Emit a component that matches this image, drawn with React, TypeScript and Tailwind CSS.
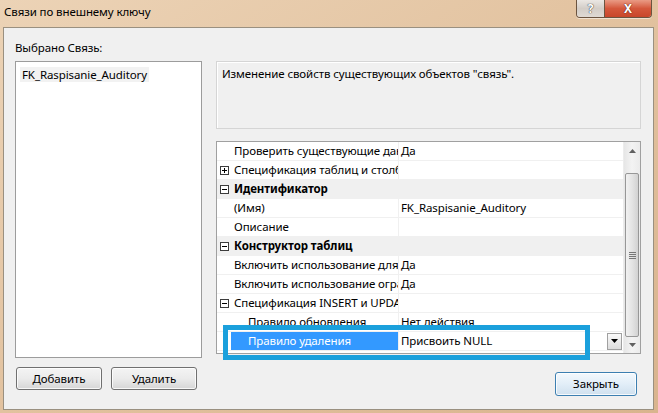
import React from "react"

type Row = {
  name: string
  value?: string
  cat?: boolean
  expander?: "+" | "-"
  indent?: boolean
  selected?: boolean
}

const rows: Row[] = [
  { name: "Проверить существующие данные при создании или повторном включении", value: "Да" },
  { name: "Спецификация таблиц и столбцов", expander: "+" },
  { name: "Идентификатор", cat: true, expander: "-" },
  { name: "(Имя)", value: "FK_Raspisanie_Auditory" },
  { name: "Описание" },
  { name: "Конструктор таблиц", cat: true, expander: "-" },
  { name: "Включить использование для репликации", value: "Да" },
  { name: "Включить использование ограничения внешнего ключа", value: "Да" },
  { name: "Спецификация INSERT и UPDATE", expander: "-" },
  { name: "Правило обновления", value: "Нет действия", indent: true },
  { name: "Правило удаления", value: "Присвоить NULL", indent: true, selected: true },
]

function Expander({ sign }: { sign: "+" | "-" }) {
  return (
    <svg width="9" height="9" viewBox="0 0 9 9" className="block">
      <rect x="0.5" y="0.5" width="8" height="8" fill="#fff" stroke="#3c3c3c" />
      <line x1="2" y1="4.5" x2="7" y2="4.5" stroke="#000" />
      {sign === "+" && <line x1="4.5" y1="2" x2="4.5" y2="7" stroke="#000" />}
    </svg>
  )
}

function WinButton({ label, wide, primary }: { label: string; wide?: boolean; primary?: boolean }) {
  return (
    <div
      className={`${wide ? "w-[82px] h-[24px]" : "w-[86px] h-[23px]"} flex items-center justify-center rounded-[3px] border ${
        primary
          ? "border-[#3c7fb1] bg-gradient-to-b from-[#f4f9fd] via-[#e2eef8] to-[#cfe0ee]"
          : "border-[#707070] bg-gradient-to-b from-[#f4f4f4] via-[#ebebeb] to-[#d6d6d6]"
      } shadow-[inset_0_0_0_1px_rgba(255,255,255,0.8)] text-black`}
    >
      {label}
    </div>
  )
}

function PropRow({ row }: { row: Row }) {
  if (row.cat) {
    return (
      <div className="flex h-[19px] bg-[#f0f0f0] border-b border-[#f0f0f0]">
        <div className="w-[14px] flex items-center justify-center pl-[1px]">
          <Expander sign={row.expander!} />
        </div>
        <div className="pl-[3px] font-bold leading-[18px] whitespace-nowrap">{row.name}</div>
      </div>
    )
  }
  return (
    <div className="flex h-[19px] border-b border-[#f0f0f0] bg-white">
      <div className="w-[14px] flex items-center justify-center pl-[1px]">
        {row.expander && <Expander sign={row.expander} />}
      </div>
      <div
        className={`w-[167px] overflow-hidden whitespace-nowrap leading-[18px] ${row.indent ? "pl-[17px]" : "pl-[3px]"} ${
          row.selected ? "bg-[#3399ff] text-white" : ""
        }`}
      >
        {row.name}
      </div>
      <div className="w-[1px] bg-[#f0f0f0]" />
      <div className="flex-1 flex items-center pl-[2px] pr-[1px] leading-[18px] whitespace-nowrap">
        <span className="flex-1">{row.value}</span>
        {row.selected && (
          <div className="w-[15px] h-[17px] border border-[#a0a0a0] bg-gradient-to-b from-[#fafafa] to-[#dcdcdc] flex items-center justify-center">
            <svg width="7" height="4" viewBox="0 0 7 4">
              <path d="M0 0h7L3.5 4z" fill="#000" />
            </svg>
          </div>
        )}
      </div>
    </div>
  )
}

function Scrollbar() {
  return (
    <div className="w-[17px] flex flex-col bg-gradient-to-r from-[#e6e6e6] via-[#f3f3f3] to-[#ebebeb] border-l border-[#ececec]">
      <div className="h-[17px] flex items-center justify-center">
        <svg width="7" height="4" viewBox="0 0 7 4">
          <path d="M0 4h7L3.5 0z" fill="#606060" />
        </svg>
      </div>
      <div className="h-[14px]" />
      <div className="h-[164px] mx-[1px] rounded-[2px] border border-[#979797] bg-gradient-to-r from-[#f1f1f1] via-[#e4e4e4] to-[#d2d2d2] flex flex-col items-center justify-center gap-[1px]">
        <div className="w-[7px] h-[1px] bg-[#777]" />
        <div className="w-[7px] h-[1px] bg-[#777]" />
        <div className="w-[7px] h-[1px] bg-[#777]" />
        <div className="w-[7px] h-[1px] bg-[#777]" />
      </div>
      <div className="flex-1 flex items-center justify-center">
        <svg width="7" height="4" viewBox="0 0 7 4">
          <path d="M0 0h7L3.5 4z" fill="#606060" />
        </svg>
      </div>
    </div>
  )
}

export default function App() {
  return (
    <div className="relative w-[658px] h-[413px] overflow-hidden bg-gradient-to-br from-[#ecd3b6] via-[#e2c29f] to-[#d9b48e] font-['Noto_Sans',sans-serif] text-[11.5px] tracking-[-0.1px] text-black">
      {/* title bar */}
      <div className="h-[27px] flex items-start justify-between">
        <div className="pl-[4px] pt-[3px] leading-[18px] text-black">Связи по внешнему ключу</div>
        <div className="flex mr-[6px] rounded-b-[4px] border border-t-0 border-[#6b5440] overflow-hidden shadow-[0_1px_0_rgba(255,255,255,0.5)]">
          <div className="w-[28px] h-[17px] flex items-center justify-center bg-gradient-to-b from-[#ebe7e3] via-[#d3cdc7] to-[#dfd9d3] border-r border-[#6b5440] text-white font-bold text-[12px] leading-none [text-shadow:0_0_1px_#333,0_0_1px_#333]">
            ?
          </div>
          <div className="w-[46px] h-[17px] flex items-center justify-center bg-gradient-to-b from-[#e99a84] via-[#d4573b] to-[#c8462a] text-white font-bold text-[12px] leading-none [text-shadow:0_0_1px_#5a1a0a,0_0_1px_#5a1a0a]">
            X
          </div>
        </div>
      </div>

      {/* client area */}
      <div className="ml-[3px] w-[651px] h-[383px] border border-[#9a9080] bg-[#f0f0f0] pl-[11px] pt-[12px]">
        <div className="leading-[16px]">Выбрано Связь:</div>

        <div className="flex mt-[5px]">
          <div className="w-[187px] h-[297px] border border-[#9c9c9c] bg-white pt-[4px] pl-[4px]">
            <span className="inline-block bg-[#f2f2f2] px-[2px] leading-[15px]">FK_Raspisanie_Auditory</span>
          </div>

          <div className="ml-[14px] w-[425px] flex flex-col">
            <div className="h-[68px] border border-[#d5d5d5] bg-[#f0f0f0] px-[5px] pt-[4px] leading-[16px] shadow-[inset_1px_1px_0_#fff]">
              Изменение свойств существующих объектов "связь".
            </div>

            <div className="relative mt-[12px] h-[213px] border border-[#a0a0a0] bg-white flex">
              <div className="flex-1 flex flex-col">
                {rows.map((r, i) => (
                  <PropRow key={i} row={r} />
                ))}
              </div>
              <Scrollbar />
            </div>
          </div>
        </div>

        <div className="w-[626px] mt-[9px] flex items-start justify-between">
          <div className="flex gap-[9px] ml-[1px]">
            <WinButton label="Добавить" />
            <WinButton label="Удалить" />
          </div>
          <div className="mt-[5px] mr-[4px]">
            <WinButton label="Закрыть" wide primary />
          </div>
        </div>
      </div>

      {/* annotation highlight */}
      <div className="absolute left-[223px] top-[325px] w-[367px] h-[35px] border-[5px] border-[#1ba0dc] pointer-events-none" />
    </div>
  )
}
